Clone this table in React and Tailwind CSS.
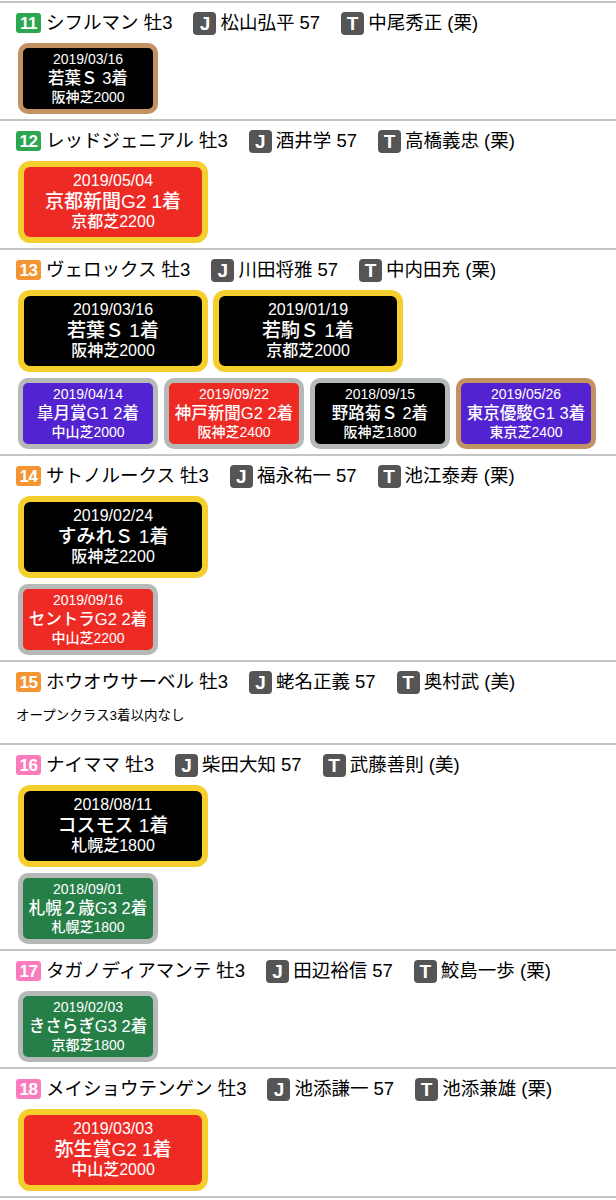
const FONT = { fontFamily: '"Liberation Sans", "Noto Sans CJK JP", sans-serif' };

const frameBg = {
  green: 'bg-[#2ea64f]',
  orange: 'bg-[#f39532]',
  pink: 'bg-[#fb7cbd]',
};

const cardBg = {
  black: 'bg-black',
  red: 'bg-[#ee2a25]',
  purple: 'bg-[#5323d2]',
  green: 'bg-[#277f48]',
};

const ringColor = {
  gold: 'border-[#f4cf2e]',
  silver: 'border-[#b5bab8]',
  bronze: 'border-[#c29263]',
};

const horses = [
  {
    no: 11, frame: 'green', name: 'シフルマン 牡3', jockey: '松山弘平 57', trainer: '中尾秀正 (栗)',
    big: [],
    small: [{ date: '2019/03/16', race: '若葉Ｓ 3着', course: '阪神芝2000', bg: 'black', ring: 'bronze' }],
  },
  {
    no: 12, frame: 'green', name: 'レッドジェニアル 牡3', jockey: '酒井学 57', trainer: '高橋義忠 (栗)',
    big: [{ date: '2019/05/04', race: '京都新聞G2 1着', course: '京都芝2200', bg: 'red' }],
    small: [],
  },
  {
    no: 13, frame: 'orange', name: 'ヴェロックス 牡3', jockey: '川田将雅 57', trainer: '中内田充 (栗)',
    big: [
      { date: '2019/03/16', race: '若葉Ｓ 1着', course: '阪神芝2000', bg: 'black' },
      { date: '2019/01/19', race: '若駒Ｓ 1着', course: '京都芝2000', bg: 'black' },
    ],
    small: [
      { date: '2019/04/14', race: '皐月賞G1 2着', course: '中山芝2000', bg: 'purple', ring: 'silver' },
      { date: '2019/09/22', race: '神戸新聞G2 2着', course: '阪神芝2400', bg: 'red', ring: 'silver' },
      { date: '2018/09/15', race: '野路菊Ｓ 2着', course: '阪神芝1800', bg: 'black', ring: 'silver' },
      { date: '2019/05/26', race: '東京優駿G1 3着', course: '東京芝2400', bg: 'purple', ring: 'bronze' },
    ],
  },
  {
    no: 14, frame: 'orange', name: 'サトノルークス 牡3', jockey: '福永祐一 57', trainer: '池江泰寿 (栗)',
    big: [{ date: '2019/02/24', race: 'すみれＳ 1着', course: '阪神芝2200', bg: 'black' }],
    small: [{ date: '2019/09/16', race: 'セントラG2 2着', course: '中山芝2200', bg: 'red', ring: 'silver' }],
  },
  {
    no: 15, frame: 'orange', name: 'ホウオウサーベル 牡3', jockey: '蛯名正義 57', trainer: '奥村武 (美)',
    big: [], small: [], note: 'オープンクラス3着以内なし',
  },
  {
    no: 16, frame: 'pink', name: 'ナイママ 牡3', jockey: '柴田大知 57', trainer: '武藤善則 (美)',
    big: [{ date: '2018/08/11', race: 'コスモス 1着', course: '札幌芝1800', bg: 'black' }],
    small: [{ date: '2018/09/01', race: '札幌２歳G3 2着', course: '札幌芝1800', bg: 'green', ring: 'silver' }],
  },
  {
    no: 17, frame: 'pink', name: 'タガノディアマンテ 牡3', jockey: '田辺裕信 57', trainer: '鮫島一歩 (栗)',
    big: [],
    small: [{ date: '2019/02/03', race: 'きさらぎG3 2着', course: '京都芝1800', bg: 'green', ring: 'silver' }],
  },
  {
    no: 18, frame: 'pink', name: 'メイショウテンゲン 牡3', jockey: '池添謙一 57', trainer: '池添兼雄 (栗)',
    big: [{ date: '2019/03/03', race: '弥生賞G2 1着', course: '中山芝2000', bg: 'red' }],
    small: [],
  },
];

function Tag({ letter }) {
  return (
    <span className="w-[23px] h-[23px] rounded-[4px] bg-[#555555] text-white text-[19px] font-bold flex items-center justify-center leading-none shrink-0">
      {letter}
    </span>
  );
}

function BigCard({ r }) {
  return (
    <div className={`w-[190px] h-[82px] rounded-[12px] border-[6px] border-[#f4cf2e] ${cardBg[r.bg]} text-white font-medium flex flex-col items-center justify-center pb-[2px]`}>
      <div className="text-[16px] leading-[20px]">{r.date}</div>
      <div className="text-[19px] leading-[21px]">{r.race}</div>
      <div className="text-[16px] leading-[20px]">{r.course}</div>
    </div>
  );
}

function SmallCard({ r }) {
  return (
    <div className={`w-[140px] h-[71px] rounded-[10px] border-[5px] ${ringColor[r.ring]} ${cardBg[r.bg]} text-white font-medium flex flex-col items-center justify-center pb-[1px]`}>
      <div className="text-[14px] leading-[17px]">{r.date}</div>
      <div className="text-[16.5px] leading-[20px] whitespace-nowrap">{r.race}</div>
      <div className="text-[14px] leading-[18px]">{r.course}</div>
    </div>
  );
}

function HorseRow({ h }) {
  return (
    <div className="border-b-2 border-[#c4c4c4] pl-4 pt-[9px] pb-[5px]">
      <div className="flex items-center h-[22px] text-[18.5px] text-black whitespace-nowrap">
        <span className={`w-[25px] h-[20px] rounded-[3px] ${frameBg[h.frame]} text-white text-[17px] font-bold flex items-center justify-center leading-none tracking-tight`}>
          {h.no}
        </span>
        <span className="ml-[5px]">{h.name}</span>
        <span className="ml-[21px] flex items-center gap-[4px]">
          <Tag letter="J" />
          <span>{h.jockey}</span>
        </span>
        <span className="ml-[21px] flex items-center gap-[4px]">
          <Tag letter="T" />
          <span>{h.trainer}</span>
        </span>
      </div>

      {h.note && (
        <p className="mt-[14px] mb-[13px] text-[13.5px] leading-[18px] text-black">{h.note}</p>
      )}

      {(h.big.length > 0 || h.small.length > 0) && (
        <div className="mt-[9px] ml-[2px] flex flex-col gap-[6px]">
          {h.big.length > 0 && (
            <div className="flex gap-[5px]">
              {h.big.map((r, i) => (
                <BigCard key={i} r={r} />
              ))}
            </div>
          )}
          {h.small.length > 0 && (
            <div className="flex gap-[6px]">
              {h.small.map((r, i) => (
                <SmallCard key={i} r={r} />
              ))}
            </div>
          )}
        </div>
      )}
    </div>
  );
}

export default function App() {
  return (
    <div className="w-[616px] bg-white border-t-2 border-[#c4c4c4] mt-px" style={FONT}>
      {horses.map((h) => (
        <HorseRow key={h.no} h={h} />
      ))}
    </div>
  );
}
